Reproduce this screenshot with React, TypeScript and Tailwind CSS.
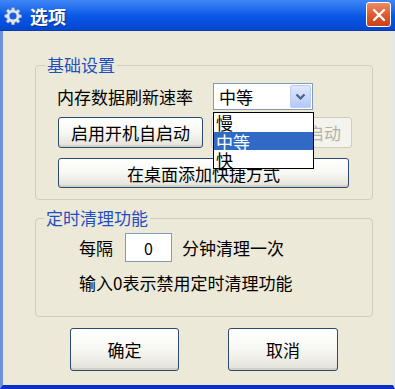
import React from "react";

const font = { fontFamily: '"Noto Sans CJK SC", "Noto Sans", sans-serif' };

const XpButton = ({
  label,
  className = "",
  disabled = false,
}: {
  label: string;
  className?: string;
  disabled?: boolean;
}) => (
  <div
    className={
      "flex items-center justify-center rounded-[3px] border text-[17px] leading-none " +
      (disabled
        ? "border-[#cfccbd] bg-[#f4f3ee] text-[#b5b2a4] "
        : "border-[#2b4a6f] bg-gradient-to-b from-[#ffffff] via-[#f7f7f3] to-[#e3e1d8] text-black shadow-[inset_0_-2px_0_#d6d0c1] ") +
      className
    }
  >
    {label}
  </div>
);

const App = () => {
  return (
    <div className="flex h-[389px] w-[395px] flex-col overflow-hidden bg-[#ECE9D8]" style={font}>
      {/* title bar */}
      <div className="flex h-[31px] shrink-0 items-center bg-gradient-to-b from-[#3f86f5] via-[#0a58e6] to-[#0345cf] pl-[4px] pr-[4px] shadow-[inset_0_-1px_0_#0a3ab0]">
        <svg width="18" height="18" viewBox="0 0 24 24" className="mt-[1px]">
          <path
            fill="#e2e6ee"
            stroke="#9aa4b8"
            strokeWidth="0.8"
            d="M10.3 1h3.4l.6 3.1 1.9.8 2.6-1.8 2.4 2.4-1.8 2.6.8 1.9 3.1.6v3.4l-3.1.6-.8 1.9 1.8 2.6-2.4 2.4-2.6-1.8-1.9.8-.6 3.1h-3.4l-.6-3.1-1.9-.8-2.6 1.8-2.4-2.4 1.8-2.6-.8-1.9L1 13.7v-3.4l3.1-.6.8-1.9-1.8-2.6 2.4-2.4 2.6 1.8 1.9-.8z"
          />
          <circle cx="12" cy="12" r="4.8" fill="#1d5fe0" />
        </svg>
        <span className="ml-[8px] text-[18px] font-bold leading-none text-white [text-shadow:1px_1px_0_#0b2f8f]">
          选项
        </span>
        <div className="ml-auto mb-[2px] flex h-[25px] w-[25px] items-center justify-center rounded-[3px] border border-white bg-gradient-to-b from-[#ee8c64] via-[#df5a30] to-[#c84018]">
          <svg width="14" height="14" viewBox="0 0 14 14">
            <path d="M2 2L12 12M12 2L2 12" stroke="white" strokeWidth="2.4" strokeLinecap="round" />
          </svg>
        </div>
      </div>

      {/* body */}
      <div className="flex flex-1 flex-col border-b-[4px] border-l-[3px] border-r-[2px] border-b-[#0831c8] border-l-[#6f93e0] border-r-[#dde6f6]">
        {/* 基础设置 */}
        <div className="relative ml-[32px] mt-[34px] h-[135px] w-[338px] rounded-[4px] border border-[#d0cdbd] pl-[21px] pt-[17px]">
          <span className="absolute -top-[11px] left-[9px] bg-[#ECE9D8] px-[2px] text-[17px] leading-[20px] text-[#1f4fc0]">
            基础设置
          </span>
          <div className="flex h-[27px] items-center">
            <span className="w-[156px] text-[17px] leading-none text-black">内存数据刷新速率</span>
            <div className="relative h-[27px] w-[100px]">
              <div className="flex h-full w-full items-center border border-[#7f9db9] bg-white pl-[5px] pr-[1px]">
                <span className="text-[17px] leading-none">中等</span>
                <div className="ml-auto flex h-[23px] w-[21px] items-center justify-center rounded-[2px] border border-[#b9cdf5] bg-gradient-to-b from-[#dfe8fd] to-[#b4c8f6]">
                  <svg width="11" height="8" viewBox="0 0 11 8">
                    <path d="M1.5 1.5L5.5 5.5L9.5 1.5" fill="none" stroke="#4d6185" strokeWidth="2.2" />
                  </svg>
                </div>
              </div>
              {/* open dropdown list */}
              <div className="absolute left-0 top-[29px] z-10 w-[101px] border border-black bg-white text-[17px] leading-[19px]">
                <div className="h-[19px] pl-[2px]">慢</div>
                <div className="h-[18px] bg-[#316AC5] pl-[2px] text-white">中等</div>
                <div className="h-[18px] pl-[2px]">快</div>
              </div>
            </div>
          </div>
          <div className="mt-[7px] flex">
            <XpButton label="启用开机自启动" className="ml-[1px] h-[31px] w-[145px]" />
            <XpButton label="关闭开机自启动" disabled className="ml-[8px] h-[31px] w-[141px]" />
          </div>
          <XpButton label="在桌面添加快捷方式" className="ml-[1px] mt-[10px] h-[30px] w-[291px]" />
        </div>

        {/* 定时清理功能 */}
        <div className="relative ml-[32px] mt-[18px] h-[99px] w-[338px] rounded-[4px] border border-[#d0cdbd] pl-[43px] pt-[14px]">
          <span className="absolute -top-[11px] left-[8px] bg-[#ECE9D8] px-[2px] text-[17px] leading-[20px] text-[#1f4fc0]">
            定时清理功能
          </span>
          <div className="flex h-[29px] items-center text-[17px] leading-none">
            <span className="w-[46px]">每隔</span>
            <div className="flex h-[29px] w-[47px] items-center justify-center border border-[#7f9db9] bg-white text-[16px]">
              0
            </div>
            <span className="ml-[10px]">分钟清理一次</span>
          </div>
          <div className="mt-[11px] text-[17px] leading-[20px]">输入0表示禁用定时清理功能</div>
        </div>

        {/* bottom buttons */}
        <div className="mt-[11px] flex">
          <XpButton label="确定" className="ml-[67px] h-[43px] w-[109px]" />
          <XpButton label="取消" className="ml-[49px] h-[43px] w-[110px]" />
        </div>
      </div>
    </div>
  );
};

export default App;
